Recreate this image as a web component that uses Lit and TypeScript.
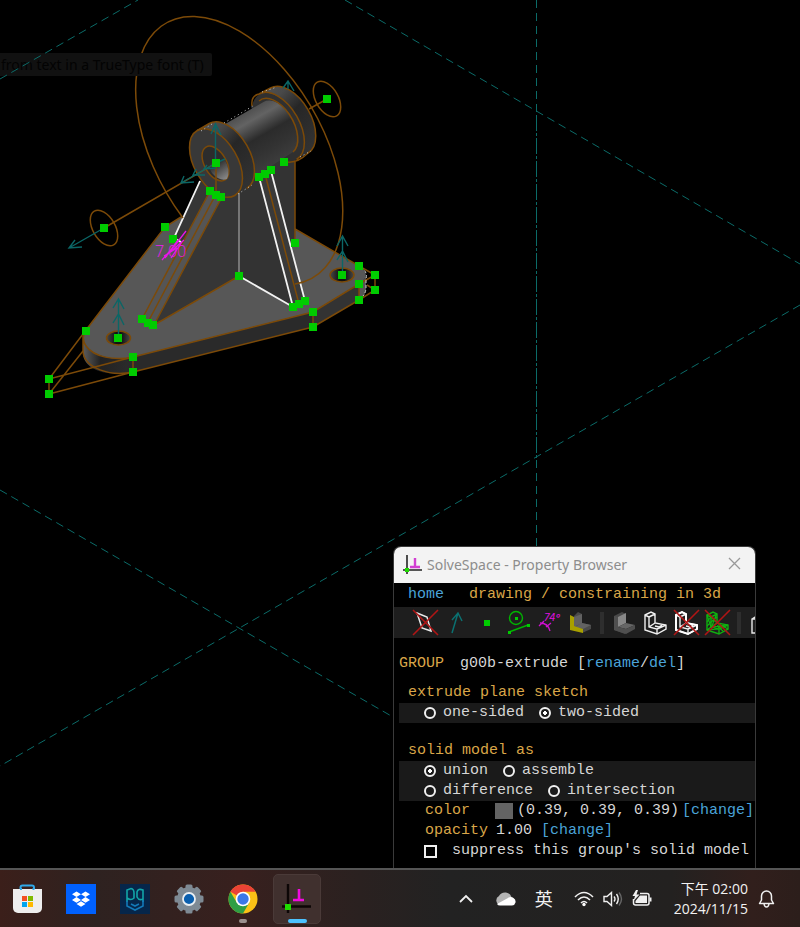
import { LitElement, html, svg, css } from "lit";
import { customElement } from "lit/decorators.js";

/* ---------- 3D sketch canvas ---------- */

const POINTS: [number, number][] = [
  [327, 99], [104, 228], [216, 163], [165, 227], [173, 239], [210, 191], [216, 195], [221, 197],
  [259, 177], [265, 174], [271, 170], [284, 162], [295, 243], [239, 276], [293, 307], [299, 304],
  [305, 301], [313, 312], [313, 327], [359, 266], [375, 275], [375, 290], [359, 284], [359, 300],
  [342, 275], [118, 338], [86, 331], [142, 319], [148, 323], [153, 325], [133, 357], [133, 372],
  [49, 379], [49, 394],
];

@customElement("sketch-canvas")
export class SketchCanvas extends LitElement {
  static styles = css`
    :host { display: block; position: absolute; inset: 0; background: #000; }
    svg { display: block; width: 100%; height: 100%; }
    .guide { stroke: #0b6b68; stroke-dasharray: 8 5; fill: none; }
    .dense { stroke: #0b6b68; stroke-dasharray: 16 2 3 2; fill: none; }
    .edge { stroke: #7c4a08; stroke-width: 1.5; fill: none; }
    .face { stroke: #7c4a08; stroke-width: 1.5; }
    .white { stroke: #f2f2f2; stroke-width: 1.8; fill: none; }
    .axis { stroke: #0b6666; stroke-width: 1.4; fill: none; }
    .dim { stroke: #e815e8; stroke-width: 1.3; fill: none; }
    .dimtext { font: 16px "Open Sans", sans-serif; font-weight: 300; fill: #f218f2; }
    .pt { fill: #00cc00; }
  `;

  render() {
    return html`<svg viewBox="0 0 800 868" preserveAspectRatio="xMinYMin slice" role="img" aria-label="Bracket model">
      <defs>
        <linearGradient id="barrel" gradientUnits="userSpaceOnUse" x1="238" y1="112" x2="270" y2="168">
          <stop offset="0" stop-color="#484848" /><stop offset=".22" stop-color="#636363" />
          <stop offset=".5" stop-color="#2b2b2b" /><stop offset=".75" stop-color="#333" /><stop offset="1" stop-color="#3d3d3d" />
        </linearGradient>
        <linearGradient id="flange" x1="0" y1="0" x2=".8" y2="1">
          <stop offset="0" stop-color="#555" /><stop offset=".25" stop-color="#484848" />
          <stop offset=".5" stop-color="#262626" /><stop offset="1" stop-color="#333" />
        </linearGradient>
        <linearGradient id="bore" gradientUnits="userSpaceOnUse" x1="206" y1="150" x2="226" y2="178">
          <stop offset="0" stop-color="#2a2a2a" /><stop offset=".5" stop-color="#303030" /><stop offset="1" stop-color="#858585" />
        </linearGradient>
        <linearGradient id="nose" gradientUnits="userSpaceOnUse" x1="83" y1="0" x2="133" y2="0">
          <stop offset="0" stop-color="#5c5c5c" /><stop offset=".35" stop-color="#222" /><stop offset="1" stop-color="#2c2c2c" />
        </linearGradient>
        <linearGradient id="hole"><stop offset="0" stop-color="#484848" /><stop offset=".4" stop-color="#111" /><stop offset=".6" stop-color="#111" /><stop offset="1" stop-color="#484848" /></linearGradient>
      </defs>

      <path class="guide" d="M345 0L800 264M800 305L0 766M0 490L393 717M536.500 0V115M536.500 460V546" />
      <path class="dense" d="M536.500 115V460" />

      <!-- base plate -->
      <path fill="url(#nose)" d="M83 336C82 350 105 361 133 357V372C105 378 82 368 83 352Z" />
      <path fill="#2a2a2a" d="M125 358L313 312V327L133 372L125 374Z" />
      <path fill="#333" d="M313 312L359 284V300L313 327Z" />
      <path fill="#555" d="M359 284Q366 279 366 273V289Q366 295 359 300Z" />
      <path fill="#575757" d="M165 227L181 217L295 229L359 266C369 272 367 279 359 284L313 312L133 357C105 363 82 350 83 336C83 334 84 332 86 330Z" />
      <path fill="#000" d="M182 217L200 180L239 150L295 160V229L240 229Z" />
      <path class="edge" d="M181 217L165 227L86 330C82 335 83 342 86 346C94 357 114 361 133 357L313 312L359 284M295 229L359 266M83 336V352C85 368 110 377 133 372L313 327L359 300M133 357V372M313 312V327M359 284V300" />
      <path class="edge" d="M86 330L49 379L133 357M49 379V394L133 372M49 394L83 351M359 266L375 275V290L359 300M375 275L359 284M367 285L375 290" />
      <path stroke="#c8c8c8" fill="none" stroke-dasharray="3 2" d="M361 267Q368 272 366 279V289Q365 295 361 298" />
      <ellipse cx="118.500" cy="338" rx="12" ry="7" fill="url(#hole)" class="face" />
      <ellipse cx="342" cy="275" rx="12" ry="7" fill="url(#hole)" class="face" />

      <!-- upright and ribs -->
      <path fill="#363636" d="M200 180L174 238L182 243L212 192Z" />
      <path fill="#363636" d="M222 197L154 325L239 276V180Z" />
      <path fill="#333" d="M239 276V180L295 150V244L291 248L271 171L259 177L293 307Z" />
      <path fill="#333" d="M239 190L259 177L293 307L239 276Z" />
      <path fill="#3a3a3a" d="M259 177L271 171L305 301L293 307Z" />
      <path fill="#555" d="M210 191L222 197L154 325L142 319Z" />
      <path class="edge" d="M210 191L142 319M216 194L148 322M222 197L154 325L239 276M265 174L299 304M295 162V244" />
      <path class="white" d="M200 181L174 238L181 242M259 177L293 307L239 276M271 171L305 301" />
      <path stroke="#8d8d8d" stroke-width="1.500" d="M239 190V276" />

      <!-- barrel -->
      <path fill="url(#flange)" d="M259.500 94.500L270.500 88A37.500 21.600 60 0 1 308 153L296.500 159.500Z" />
      <ellipse cx="278" cy="127" rx="37.500" ry="21.600" transform="rotate(60 278 127)" fill="#303030" />
      <path class="edge" d="M252 106C251 98 254 95 259 94L270.500 88A37.500 21.600 60 0 1 308 153C303 158 295 163 287 162M259 94A37.500 21.600 60 0 1 296.500 159.500" />
      <path fill="url(#barrel)" d="M213 131L263.500 102A29 16.700 60 0 1 293 152L243 184Z" />
      <path class="edge" d="M259 101A29 16.700 60 0 1 293 152" />
      <path fill="url(#flange)" d="M197.250 130.500L209.250 123.500A37.500 21.600 60 0 1 246.750 188.500L234.750 195.500Z" />
      <ellipse cx="216" cy="163" rx="37.500" ry="21.600" transform="rotate(60 216 163)" fill="#383838" class="face" />
      <path class="edge" d="M197.250 130.500L209.250 123.500A37.500 21.600 60 0 1 246.750 188.500" />
      <ellipse cx="215.500" cy="163.500" rx="19" ry="11" transform="rotate(60 215.500 163.500)" fill="#2c2c2c" class="face" />
      <path fill="url(#bore)" d="M208 166Q216 158 225 160Q231 171 227 179Q220 182 212 173Z" />
      <path stroke="#c8c8c8" fill="none" stroke-dasharray="1 3" d="M262 92L277 87M224 123L253 106M201 131L212 124M238 194L252 185M300 157L311 151" />

      <!-- construction curves -->
      <path class="edge" d="M183 218A147 84.200 60 1 1 295 284" />
      <ellipse class="edge" cx="104" cy="228" rx="19.400" ry="11.200" transform="rotate(60 104 228)" />
      <ellipse class="edge" cx="327" cy="99" rx="19.400" ry="11.200" transform="rotate(60 327 99)" />
      <path class="edge" d="M104 228L216 163V194M309 109L327 99" />

      <!-- axes -->
      <path class="axis" d="M104 228L69 248M75 240L69 248L82 247M118.500 338V299M113 308L118.500 299L124 309M113 323L118.500 314L124 325M342.500 275V236M337 246L342.500 236L348 246M337 260L342.500 251L348 262M215.500 163V124M211 134L215.500 124L221 135M288 89V81M283 88L288 81L294 91" />
      <path class="axis" d="M216 163L181 183M184 176L181 183L194 182M196 169L193 175L205 175M207 165L204 169L216 168M216 163L225 159" />

      ${POINTS.map(([x, y]) => svg`<rect class="pt" x=${x - 4} y=${y - 4} width="8" height="8" />`)}
      <text class="dimtext" x="155" y="257">7.00</text>
      <path class="dim" d="M186 231L176 244L162 260M165 258L178 240M171 258L182 242M164 256L177 248M168 254L184 240" />
    </svg>`;
  }
}

/* ---------- toolbar glyphs, 28 x 28 ---------- */

const cross = svg`<path d="M2 1L27 26M27 1L2 26" stroke="#b01515" stroke-width="1.600" fill="none" />`;
const bracketLines = (stroke: string) => svg`<g fill="none" stroke=${stroke} stroke-width="1.400">
  <path d="M4 6L10 3L14 5V14L25 16V20L16 25L4 21ZM4 6L8 8V18L16 20V25M8 8L14 5M8 18L14 14M16 20L25 16M14 17L18 18L21 16" /></g>`;
const bracketSolid = svg`<path fill="#484848" d="M4 7L12 3L16 5L8 9V20L15 21V25L4 21Z" />
  <path fill="#888" d="M8 8L16 4V14L8 18Z" /><path fill="#666" d="M8 18L16 14L25 16L16 20Z" />
  <path fill="#4f4f4f" d="M16 20L25 16V20L16 25ZM4 7L8 8V18L16 20V25L4 21Z" />`;

const TOOLS: { label: string; sep?: boolean; art?: unknown }[] = [
  { label: "Show workplanes", art: svg`<path d="M6 4L16 8L20 22L11 19Z" fill="none" stroke="#e8e8e8" stroke-width="1.500" />${cross}` },
  { label: "Show normals", art: svg`<path d="M10 24L16 4M10 11L16 4L20 12" fill="none" stroke="#0b7070" stroke-width="1.500" />` },
  { label: "Show points", art: svg`<rect x="11" y="11" width="6" height="6" fill="#00cc00" />` },
  { label: "Show constrained entities", art: svg`<g fill="none" stroke="#00b400" stroke-width="1.400"><circle cx="12" cy="9" r="6.500" /><path d="M5 23L24 16" /></g><path fill="#00cc00" d="M11 8h3v3h-3zM4 22h3v3h-3zM23 15h3v3h-3z" />` },
  { label: "Show constraints", art: svg`<path d="M5 14Q13 14 15 22M4 17L9 12M11 18L16 14" fill="none" stroke="#d010d0" stroke-width="1.300" /><text x="9" y="12" font-family="Inter, sans-serif" font-style="italic" font-size="10" fill="#e010e0">74º</text>` },
  { label: "Show faces", art: svg`<path fill="#4a4a4a" d="M8 7L12 3L16 5V14L25 16V20L16 24V20L8 18Z" /><path fill="#626262" d="M8 8L16 5V14L8 18ZM9 18L16 14L25 16L17 20Z" /><path fill="#a8a000" d="M4 6L8 8V17L17 20V24L4 21Z" />` },
  { label: "", sep: true },
  { label: "Show shaded model", art: bracketSolid },
  { label: "Show edges", art: bracketLines("#f0f0f0") },
  { label: "Show outlines", art: svg`${bracketLines("#f0f0f0")}<path d="M4 6L10 3L14 5V14L25 16V20L16 25L4 21Z" fill="none" stroke="#fff" stroke-width="2" />${cross}` },
  { label: "Show mesh", art: svg`${bracketLines("#10b010")}<path d="M4 6L8 18L4 21M4 13L8 8L14 14L25 20M8 18L25 16M8 13L14 8M4 21L16 20M4 17L8 13M9 17L13 6M14 17L20 22" fill="none" stroke="#10b010" stroke-width="1.200" />${cross}` },
  { label: "", sep: true },
  { label: "Show hidden lines", art: svg`<path d="M5 10L13 5L24 8V24H5ZM5 10H10V24" fill="none" stroke="#e8e8e8" stroke-width="1.400" />` },
];

/* ---------- property browser window ---------- */

@customElement("property-browser")
export class PropertyBrowser extends LitElement {
  static styles = css`
    :host {
      display: flex; flex-direction: column; box-sizing: border-box; overflow: hidden;
      background: #000; border: 1px solid #3a3a3a; border-bottom: 0; border-radius: 8px 8px 0 0;
      font: 15px/20px "Liberation Mono", monospace; color: #d6d6d6; white-space: nowrap;
    }
    .title {
      display: flex; align-items: center; gap: 4px; height: 36px; padding: 0 12px 0 8px;
      background: #f3f3f3; color: #8d8d8d; font: 14px/20px "Noto Sans", sans-serif;
    }
    .title span { flex: 1; }
    button { border: 0; padding: 0; margin: 0; background: none; display: block; cursor: pointer; }
    svg { display: block; }
    a { color: #4aa3d8; text-decoration: none; }
    .amber { color: #d9a648; }
    .nav { display: flex; gap: 25px; height: 24px; padding-left: 14px; align-items: center; }
    .tools { display: flex; align-items: center; height: 31px; padding-left: 15px; background: #1e1e1e; }
    .tools button { flex: none; width: 31px; display: flex; justify-content: center; }
    .sep { flex: none; width: 13px; height: 22px; display: flex; justify-content: center; }
    .sep::before { content: ""; width: 4px; background: #2e2e2e; }
    .sheet { padding: 16px 0 7px 5px; display: flex; flex-direction: column; }
    .row { display: flex; align-items: center; height: 20px; }
    .row > * { flex: none; }
    .group { gap: 16px; margin-bottom: 9px; }
    .head { padding-left: 9px; }
    fieldset { border: 0; margin: 0; padding: 0; min-width: 0; }
    legend { padding: 0; height: 20px; }
    .gap { margin-bottom: 18px; }
    .band { background: #1a1a1a; padding-left: 25px; gap: 15px; }
    .pad { padding-left: 26px; }
    .check { padding-left: 25px; }
    label { display: flex; align-items: center; gap: 7px; }
    .check label { gap: 15px; }
    input { appearance: none; box-sizing: border-box; width: 12px; height: 12px; margin: 0; border: 2px solid #f0f0f0; flex: none; }
    input[type="radio"] { border-radius: 50%; }
    input[type="radio"]:checked { background: radial-gradient(circle, #fff 0 2px, transparent 2px); }
    input[type="checkbox"] { width: 13px; height: 13px; }
    .swatch { width: 18px; height: 16px; background: #636363; margin: 0 4px 0 25px; }
    .rgb { margin-right: 3px; }
    .value { margin: 0 9px 0 8px; }
  `;

  private radio(name: string, text: string, checked = false) {
    return html`<label><input type="radio" name=${name} ?checked=${checked} />${text}</label>`;
  }

  render() {
    return html`
      <div class="title">
        <svg width="21" height="22" viewBox="0 0 21 22"><path d="M5 1V20M1 16H20" stroke="#222" stroke-width="1.600" /><rect x="3" y="14" width="4" height="4" fill="#1fdc00" /><path d="M13 4V13M8 13H18" stroke="#d23fd2" stroke-width="2.400" /></svg>
        <span>SolveSpace - Property Browser</span>
        <button aria-label="Close"><svg width="16" height="16" viewBox="0 0 16 16"><path d="M2 1L13 12M13 1L2 12" stroke="#999" stroke-width="1.300" /></svg></button>
      </div>
      <nav class="nav"><a href="#home">home</a><span class="amber">drawing / constraining in 3d</span></nav>
      <div class="tools">
        ${TOOLS.map((t) => t.sep
          ? html`<span class="sep"></span>`
          : html`<button aria-label=${t.label}><svg width="28" height="28" viewBox="0 0 28 28">${t.art}</svg></button>`)}
      </div>
      <div class="sheet">
        <div class="row group"><span class="amber">GROUP</span><span>g00b-extrude [<a href="#rename">rename</a>/<a href="#del">del</a>]</span></div>
        <fieldset class="gap">
          <legend class="head amber">extrude plane sketch</legend>
          <div class="row band">${this.radio("sides", "one-sided")}${this.radio("sides", "two-sided", true)}</div>
        </fieldset>
        <fieldset>
          <legend class="head amber">solid model as</legend>
          <div class="row band">${this.radio("op", "union", true)}${this.radio("op", "assemble")}</div>
          <div class="row band">${this.radio("op", "difference")}${this.radio("op", "intersection")}</div>
        </fieldset>
        <div class="row pad"><span class="amber">color</span><span class="swatch"></span><span class="rgb">(0.39, 0.39, 0.39)</span><a href="#color">[change]</a></div>
        <div class="row pad"><span class="amber">opacity</span><span class="value">1.00</span><a href="#opacity">[change]</a></div>
        <div class="row check"><label><input type="checkbox" />suppress this group's solid model</label></div>
      </div>`;
  }
}

/* ---------- taskbar ---------- */

const gearTeeth = Array.from({ length: 4 }, (_, i) => svg`<rect x="11.500" y="0.500" width="7" height="29" rx="1.500" transform="rotate(${i * 45} 15 15)" />`);

const APPS: { label: string; state?: string; art: unknown }[] = [
  { label: "Microsoft Store", art: svg`<path d="M8.500 6V3.500a2 2 0 0 1 2-2H20a2 2 0 0 1 2 2V6" fill="none" stroke="#2fa8e8" stroke-width="2" /><path d="M1 5H30V24a5 5 0 0 1-5 5H6a5 5 0 0 1-5-5Z" fill="#eee" /><path d="M9 6V4M21.500 6V4" stroke="#2fa8e8" stroke-width="2" /><path fill="#f25022" d="M10 12h5v5h-5z" /><path fill="#7fba00" d="M16 12h5v5h-5z" /><path fill="#00a4ef" d="M10 18h5v5h-5z" /><path fill="#ffb900" d="M16 18h5v5h-5z" />` },
  { label: "Dropbox", art: svg`<path fill="#0061fe" d="M0 0H30V30H0Z" /><path fill="#fff" d="M10.500 7.500L15 10.300L10.500 13.100L6 10.300ZM19.500 7.500L24 10.300L19.500 13.100L15 10.300ZM10.500 13.100L15 15.900L10.500 18.700L6 15.900ZM19.500 13.100L24 15.900L19.500 18.700L15 15.900ZM15 17.200L19.500 20L15 22.800L10.500 20Z" />` },
  { label: "PG", art: svg`<path fill="#06264a" d="M0 0H30V30H0Z" /><g fill="none" stroke-width="1.600"><path stroke="#12a5a8" d="M7 18V6L11 4.500Q14 5 14 9V14Q11 17 7 14M23 15Q19 17 17 13V8Q18 4 23 6V18" /><path stroke="#1379b8" d="M7 17V22L15 26L23 22V16M11 20L15 22L19 20" /></g>` },
  { label: "Settings", art: svg`<g fill="#7e8a94">${gearTeeth}<circle cx="15" cy="15" r="12" /></g><circle cx="15" cy="15" r="6" fill="#0a5fae" stroke="#e8eef2" stroke-width="1.800" />` },
  { label: "Google Chrome", state: "open", art: svg`<circle cx="15" cy="15" r="14.500" fill="#fbc116" /><path fill="#ea4335" d="M15 15L2.440 7.750A14.500 14.500 0 0 1 27.560 7.750H15Z" /><path fill="#2f9e44" d="M2.440 7.750A14.500 14.500 0 0 0 15 29.500L21.300 18.600L15 15L8.700 18.600Z" /><circle cx="15" cy="15" r="7.300" fill="#fff" /><circle cx="15" cy="15" r="5.700" fill="#3b78e7" />` },
  { label: "SolveSpace", state: "active", art: svg`<path d="M6 0V29M0 22.500H29" stroke="#0c0606" stroke-width="2.400" /><rect x="3" y="20" width="6" height="6" fill="#1fdc00" /><path d="M17 5V16M11 16H22" stroke="#f00be0" stroke-width="2.600" />` },
];

@customElement("task-bar")
export class TaskBar extends LitElement {
  static styles = css`
    :host {
      display: flex; align-items: center; box-sizing: border-box; height: 59px; padding: 0 25px 0 3px;
      border-top: 2px solid #555;
      background: linear-gradient(90deg, #3b1f1a 0%, #2e2220 12%, #38201e 30%, #2a2120 45%, #222 56%, #232120 84%, #311f1c 94%, #2c1e1b 100%);
      color: #f2f2f2; font: 14px/20px "Open Sans", "Noto Sans CJK TC", sans-serif;
    }
    button { border: 0; margin: 0; padding: 0; background: none; color: inherit; font: inherit; display: block; cursor: pointer; }
    svg { display: block; }
    .apps { display: flex; gap: 6px; flex: 1; }
    .app { position: relative; width: 48px; height: 50px; display: flex; align-items: center; justify-content: center; border-radius: 5px; box-sizing: border-box; }
    .active { background: #40302e; border: 1px solid #4a3a38; }
    .open::after, .active::after { content: ""; position: absolute; bottom: 1px; width: 8px; height: 4px; border-radius: 2px; background: #9c908e; }
    .active::after { width: 19px; bottom: 0; background: #4cc2ff; }
    .tray { display: flex; align-items: center; }
    .cloud { margin: 0 19px 0 22px; }
    .ime { font-size: 18px; margin-right: 21px; }
    .net { display: flex; align-items: center; gap: 9px; margin-right: 22px; }
    .clock { text-align: right; margin-right: 10px; }
  `;

  render() {
    return html`
      <div class="apps">
        ${APPS.map((a) => html`<button class="app ${a.state ?? ""}" aria-label=${a.label}><svg width="30" height="30" viewBox="0 0 30 30">${a.art}</svg></button>`)}
      </div>
      <div class="tray">
        <button aria-label="Show hidden icons"><svg width="14" height="14" viewBox="0 0 14 14"><path d="M1 10L7 4L13 10" fill="none" stroke="#f0f0f0" stroke-width="1.800" /></svg></button>
        <button class="cloud" aria-label="OneDrive"><svg width="21" height="14" viewBox="0 0 21 14"><path fill="#b4b4b4" d="M5 13A4.800 4.800 0 0 1 4 4Q6 0 11 0.500Q15 1 16.500 5L12 13Z" /><path fill="#fff" d="M2 12L13 6Q16 4 18.500 6Q21 7.500 20.500 10.500Q20 13 17 13.500H5Q3 13.500 2 12Z" /></svg></button>
        <button class="ime">英</button>
        <button class="net" aria-label="Network, volume, battery">
          <svg width="20" height="16" viewBox="0 0 20 16"><g fill="none" stroke="#f0f0f0" stroke-width="1.600"><path d="M1 6Q10 -3 19 6M4 9Q10 3 16 9M7 12Q10 9 13 12" /></g><circle cx="10" cy="13.500" r="1.700" fill="#fff" /></svg>
          <svg width="20" height="16" viewBox="0 0 20 16"><g fill="none" stroke="#f0f0f0" stroke-width="1.400"><path d="M1 5.500H4L8.500 1.500V14.500L4 10.500H1ZM11 5.500Q13 8 11 10.500M13.500 3Q17 8 13.500 13" /><path stroke="#666" d="M16 1.500Q21 8 16 14.500" /></g></svg>
          <svg width="20" height="18" viewBox="0 0 20 18"><path d="M8 3.500H15A2 2 0 0 1 17 5.500V13A2 2 0 0 1 15 15H3.500A2 2 0 0 1 1.500 13V9" fill="none" stroke="#f0f0f0" stroke-width="1.500" /><path fill="#f0f0f0" d="M8 5.500H15V13H3.500V11ZM17.500 7.500h2v4h-2zM4 0L0.500 6H3L1.500 11L7.500 4.500H4.500L6 0Z" /></svg>
        </button>
        <button class="clock"><div>下午 02:00</div><div>2024/11/15</div></button>
        <button aria-label="Notifications"><svg width="17" height="20" viewBox="0 0 17 20"><path d="M1.500 14.500L3.500 11V7A5 5 0 0 1 13.500 7V11L15.500 14.500ZM6 15Q6.500 18 8.500 18Q10.500 18 11 15" fill="none" stroke="#f0f0f0" stroke-width="1.500" stroke-linejoin="round" /></svg></button>
      </div>`;
  }
}

/* ---------- desktop ---------- */

@customElement("app-root")
export class AppRoot extends LitElement {
  static styles = css`
    :host { display: flex; flex-direction: column; min-height: 100vh; background: #000; }
    .desktop { position: relative; flex: 1; overflow: hidden; }
    .tip {
      position: absolute; left: 0; top: 53px; padding: 0 8px 0 1px; border-radius: 0 2px 2px 0;
      background: #111; color: #030303; font: 14px/23px "Noto Sans", sans-serif; white-space: nowrap;
    }
    .over { position: absolute; left: 0; top: 0; width: 140px; height: 80px; }
    .over path { stroke: #0b6b68; stroke-dasharray: 8 5; }
    property-browser { position: absolute; right: 44px; bottom: 0; width: 363px; }
  `;

  render() {
    return html`
      <main class="desktop">
        <sketch-canvas></sketch-canvas>
        <div class="tip" role="tooltip">from text in a TrueType font (T)</div>
        <svg class="over" viewBox="0 0 140 80"><path d="M0 79L138 0" fill="none" /></svg>
        <property-browser></property-browser>
      </main>
      <task-bar></task-bar>`;
  }
}
